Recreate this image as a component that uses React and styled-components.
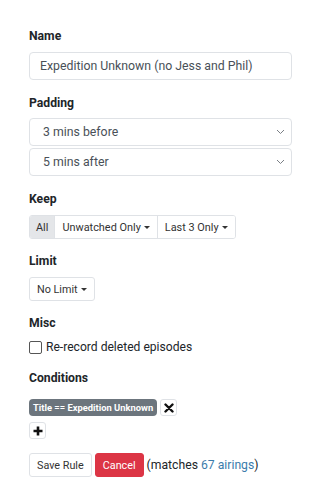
import React from 'react';
import styled, { createGlobalStyle } from 'styled-components';

const GlobalStyle = createGlobalStyle`
  * { box-sizing: border-box; }
  body {
    margin: 0;
    background: #fff;
    font-family: Roboto, "Liberation Sans", sans-serif;
    color: #212529;
  }
`;

const Form = styled.div`
  padding: 27px 28px 0 29px;
  display: flex;
  flex-direction: column;
`;

const Section = styled.div`
  display: flex;
  flex-direction: column;
  margin-bottom: ${(p) => p.$gap || 14}px;
`;

const Label = styled.div`
  font-size: 12.2px;
  font-weight: 700;
  line-height: 18px;
  margin-bottom: ${(p) => p.$gap || 7}px;
`;

const TextInput = styled.div`
  height: 28px;
  border: 1px solid #dfe2e6;
  border-radius: 4px;
  padding: 0 10px;
  display: flex;
  align-items: center;
  font-size: 12.3px;
  color: #495057;
`;

const Select = styled(TextInput)`
  justify-content: space-between;
  padding: 0 6px 0 13px;
  margin-bottom: 2px;
`;

const Chevron = () => (
  <svg width="9" height="6" viewBox="0 0 9 6">
    <path d="M1 1l3.5 3.5L8 1" fill="none" stroke="#7a7f85" strokeWidth="1" />
  </svg>
);

const Group = styled.div`
  display: flex;
  align-self: flex-start;
  border: 1px solid #dfe2e6;
  border-radius: 3px;
  overflow: hidden;
`;

const GroupBtn = styled.div`
  height: 22px;
  display: flex;
  align-items: center;
  gap: 3px;
  padding: 0 ${(p) => (p.$active ? 6 : 7)}px;
  font-size: 10.9px;
  color: #333;
  background: ${(p) => (p.$active ? '#e4e6e9' : '#fff')};
  & + & {
    border-left: 1px solid #dfe2e6;
  }
`;

const Caret = styled.span`
  width: 0;
  height: 0;
  border-left: 3px solid transparent;
  border-right: 3px solid transparent;
  border-top: 3.5px solid #333;
  margin-top: 1px;
`;

const Button = styled.div`
  align-self: flex-start;
  height: 24px;
  display: flex;
  align-items: center;
  gap: 3px;
  padding: 0 ${(p) => p.$pad || 7}px;
  font-size: 10.8px;
  color: ${(p) => (p.$danger ? '#fff' : '#333')};
  background: ${(p) => (p.$danger ? '#dc3545' : '#fff')};
  border: 1px solid ${(p) => (p.$danger ? '#dc3545' : '#dfe2e6')};
  border-radius: 3px;
`;

const CheckRow = styled.label`
  display: flex;
  align-items: center;
  gap: 4px;
  font-size: 12.1px;
  line-height: 16px;
  color: #212529;
`;

const Box = styled.span`
  width: 13px;
  height: 13px;
  border: 1px solid #555;
  border-radius: 2px;
  background: #fff;
`;

const Row = styled.div`
  display: flex;
  align-items: center;
  gap: 3px;
  margin-bottom: ${(p) => p.$mb || 0}px;
`;

const Badge = styled.span`
  height: 17px;
  display: flex;
  align-items: center;
  padding: 0 4px;
  background: #6c757d;
  color: #fff;
  font-size: 9.4px;
  font-weight: 700;
  border-radius: 4px;
`;

const IconBtn = styled.span`
  width: 17px;
  height: 17px;
  display: flex;
  align-items: center;
  justify-content: center;
  border: 1px solid #dfe2e6;
  border-radius: 3px;
  background: #fff;
`;

const Matches = styled.span`
  font-size: 12.2px;
  color: #212529;
`;

const Link = styled.span`
  color: #3b7cab;
`;

export default function App() {
  return (
    <>
      <GlobalStyle />
      <Form>
        <Section>
          <Label>Name</Label>
          <TextInput>Expedition Unknown (no Jess and Phil)</TextInput>
        </Section>
        <Section $gap={12}>
          <Label $gap={6}>Padding</Label>
          <Select>
            3 mins before <Chevron />
          </Select>
          <Select>
            5 mins after <Chevron />
          </Select>
        </Section>
        <Section $gap={13}>
          <Label>Keep</Label>
          <Group>
            <GroupBtn $active>All</GroupBtn>
            <GroupBtn>
              Unwatched Only <Caret />
            </GroupBtn>
            <GroupBtn>
              Last 3 Only <Caret />
            </GroupBtn>
          </Group>
        </Section>
        <Section $gap={13}>
          <Label>Limit</Label>
          <Button>
            No Limit <Caret />
          </Button>
        </Section>
        <Section $gap={14}>
          <Label>Misc</Label>
          <CheckRow>
            <Box />
            Re-record deleted episodes
          </CheckRow>
        </Section>
        <Section>
          <Label $gap={12}>Conditions</Label>
          <Row $mb={6}>
            <Badge>Title == Expedition Unknown</Badge>
            <IconBtn>
              <svg width="10" height="10" viewBox="0 0 10 10">
                <path d="M1.5 1.5l7 7M8.5 1.5l-7 7" stroke="#111" strokeWidth="2.4" strokeLinecap="round" />
              </svg>
            </IconBtn>
          </Row>
          <Row $mb={14}>
            <IconBtn>
              <svg width="10" height="10" viewBox="0 0 10 10">
                <path d="M5 0.5v9M0.5 5h9" stroke="#111" strokeWidth="2.6" />
              </svg>
            </IconBtn>
          </Row>
          <Row>
            <Button $pad={7}>Save Rule</Button>
            <Button $pad={7} $danger>Cancel</Button>
            <Matches>
              (matches <Link>67 airings</Link>)
            </Matches>
          </Row>
        </Section>
      </Form>
    </>
  );
}
